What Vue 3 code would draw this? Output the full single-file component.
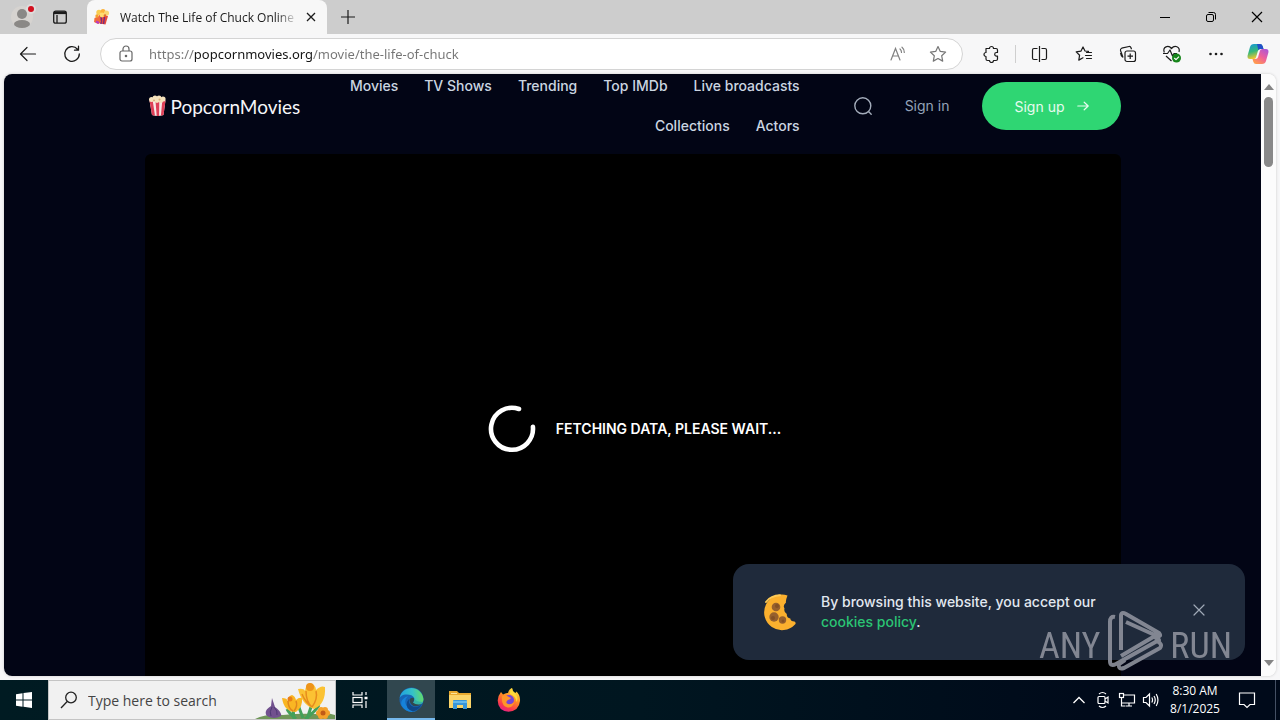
<script setup>
import { ref } from 'vue'

const url = ref('https://popcornmovies.org/movie/the-life-of-chuck')
const query = ref('')
const links = ['Movies', 'TV Shows', 'Trending', 'Top IMDb', 'Live broadcasts', 'Collections', 'Actors']
</script>

<template>
  <div class="desktop">
    <header class="tabs">
      <button class="tab-tool profile" aria-label="Profile">
        <svg width="28" height="28" viewBox="0 0 28 28">
          <circle cx="14" cy="14" r="11" fill="#d6d3d0" />
          <circle cx="14" cy="11" r="5" fill="#8a8886" />
          <ellipse cx="14" cy="21" rx="8" ry="4" fill="#8a8886" />
          <circle cx="23" cy="6" r="5" fill="#dedcdb" />
          <circle cx="23" cy="6" r="3" fill="#d20f1e" />
        </svg>
      </button>
      <button class="tab-tool" aria-label="Tab actions">
        <svg width="16" height="16" viewBox="0 0 16 16" fill="none" stroke="#1b1b1b" stroke-width="1.3">
          <rect x="1.7" y="2.2" width="12.6" height="12" rx="2" />
          <path d="M2 3.8h12" stroke-width="2.600" />
          <path d="M5 6v8" />
        </svg>
      </button>
      <div class="tab">
        <svg width="18" height="18" viewBox="0 0 18 18">
          <path d="M6 7l9 1-2.500 8.500-6-1z" fill="#e9483a" />
          <path d="M8.500 8l-.5 8M11.500 9l-1 7" stroke="#6d2c86" stroke-width="1.300" />
          <path d="M1.500 10l4.500-2 2 6-3 2-4-2z" fill="#f26b3c" />
          <path d="M3 13.500l3 1.500" stroke="#b53cc4" stroke-width="2" />
          <circle cx="6" cy="4.500" r="2.700" fill="#f9cc4f" />
          <circle cx="10" cy="3.500" r="2.500" fill="#fbb23a" />
          <circle cx="13.500" cy="5" r="2.600" fill="#f9d774" />
          <circle cx="9" cy="7" r="2.400" fill="#ffdc70" />
          <circle cx="4" cy="8" r="1.700" fill="#f5a12e" />
          <circle cx="12" cy="7.500" r="1.300" fill="#e2702b" />
        </svg>
        <span class="tab-title">Watch The Life of Chuck Online Full</span>
        <button class="tab-close" aria-label="Close tab">
          <svg width="12" height="12" viewBox="0 0 12 12" stroke="#1b1b1b" stroke-width="1.3"><path d="M2 2l8 8M10 2l-8 8" /></svg>
        </button>
      </div>
      <button class="new-tab" aria-label="New tab">
        <svg width="16" height="16" viewBox="0 0 16 16" stroke="#1b1b1b" stroke-width="1.2"><path d="M8 1v14M1 8h14" /></svg>
      </button>
      <div class="window-buttons">
        <button aria-label="Minimize"><svg width="12" height="12" viewBox="0 0 12 12" stroke="#000"><path d="M1 6.500h10" /></svg></button>
        <button aria-label="Restore">
          <svg width="12" height="12" viewBox="0 0 12 12" fill="none" stroke="#000"><rect x="1.500" y="3.500" width="7" height="7" rx="1.500" /><path d="M3.500 1.500h5a2 2 0 0 1 2 2v5" /></svg>
        </button>
        <button aria-label="Close"><svg width="12" height="12" viewBox="0 0 12 12" stroke="#000" stroke-width="1.2"><path d="M1 1l10 10M11 1L1 11" /></svg></button>
      </div>
    </header>

    <div class="toolbar">
      <button class="tool" aria-label="Back">
        <svg width="18" height="18" viewBox="0 0 18 18" fill="none" stroke="#1b1b1b" stroke-width="1.2" stroke-linecap="round" stroke-linejoin="round"><path d="M16.500 9H1.500M8 2.500L1.500 9 8 15.500" /></svg>
      </button>
      <button class="tool" aria-label="Refresh">
        <svg width="18" height="18" viewBox="0 0 18 18" fill="none" stroke="#1b1b1b" stroke-width="1.3" stroke-linecap="round" stroke-linejoin="round"><path d="M16.300 9A7.300 7.300 0 1 1 14.500 4.200M15.500 1.200v4h-4" /></svg>
      </button>
      <div class="address">
        <svg width="16" height="18" viewBox="0 0 16 18" fill="none" stroke="#666" stroke-width="1.2"><rect x="2" y="6" width="12" height="10" rx="2" /><path d="M5 6V4a3 3 0 0 1 6 0v2" /><circle cx="8" cy="11" r=".7" fill="#666" /></svg>
        <input v-model="url" class="url" type="text" aria-label="Address" spellcheck="false" />
        <button class="address-tool" aria-label="Read aloud">
          <svg width="18" height="18" viewBox="0 0 18 18" fill="none" stroke="#808080" stroke-width="1.2" stroke-linecap="round"><path d="M2 15L6.500 3.500 11 15M3.500 11h6M11 4q1.500 1.300 1.500 3.500M13 2.200q2.500 2 2.300 5.300" /></svg>
        </button>
        <button class="address-tool" aria-label="Favorite">
          <svg width="18" height="18" viewBox="0 0 18 18" fill="none" stroke="#777" stroke-width="1.200" stroke-linejoin="round"><path d="M9 1.500l2.300 4.900 5.300.7-3.900 3.700 1 5.300L9 13.500l-4.700 2.600 1-5.300L1.400 7.100l5.300-.7z" /></svg>
        </button>
      </div>
      <button class="tool" aria-label="Extensions">
        <svg width="18" height="18" viewBox="0 0 18 18" fill="none" stroke="#1b1b1b" stroke-width="1.200" stroke-linejoin="round"><path d="M4 3.500h3.500a2 2 0 0 1 4 0H14q1.500 0 1.500 1.500v2.500h-1a1.800 1.800 0 0 0 0 3.600h1V14q0 1.500-1.500 1.500h-2.500a2 2 0 0 1-4 0H5.500Q4 15.500 4 14v-2.500a2 2 0 0 1 0-4z" /></svg>
      </button>
      <span class="divider"></span>
      <button class="tool" aria-label="Split screen">
        <svg width="18" height="18" viewBox="0 0 18 18" fill="none" stroke="#1b1b1b" stroke-width="1.200"><path d="M8.500 1v16M6.500 3.500H3q-1.500 0-1.500 1.500v8q0 1.500 1.500 1.500h3.500M10.500 3.500H14q1.500 0 1.500 1.500v8q0 1.500-1.500 1.500h-3.500" /></svg>
      </button>
      <button class="tool" aria-label="Favorites">
        <svg width="18" height="18" viewBox="0 0 18 18" fill="none" stroke="#1b1b1b" stroke-width="1.200" stroke-linejoin="round" stroke-linecap="round"><path d="M13.500 6.400l-3.500-.4L8 2 5.900 6.200l-4.700.7 3.400 3.300-.8 4.900L8 12.800M11.500 7.500h5M10.500 10.500h6M11.500 13.500h5" /></svg>
      </button>
      <button class="tool" aria-label="Collections">
        <svg width="18" height="18" viewBox="0 0 18 18" fill="none" stroke="#1b1b1b" stroke-width="1.200" stroke-linejoin="round"><rect x="6" y="6" width="10.500" height="10.500" rx="2" /><path d="M11.200 8.500v5.500M8.500 11.200H14M4 12.500L1.500 5.500q-.4-1.700 1.200-2.300L10 1.500q1.500-.2 2 1.300l.5 1.400M3.500 12Q2 11 1.500 8" /></svg>
      </button>
      <button class="tool" aria-label="Browser essentials">
        <svg width="20" height="20" viewBox="0 0 20 20" fill="none" stroke="#1b1b1b" stroke-width="1.200" stroke-linejoin="round"><path d="M2.300 8.500C.2 2.500 6.500.8 9.500 4.500 12.500.800 18.500 2.500 17 8M4 12l5.500 5M1 9.500h4.500L8 6l2.500 6 1.500-2.500h3" /><circle cx="14.500" cy="14" r="4.500" fill="#16851b" stroke="none" /><path d="M12.300 14l1.700 1.600 3-3" stroke="#fff" /></svg>
      </button>
      <button class="tool" aria-label="More">
        <svg width="18" height="18" viewBox="0 0 18 18" fill="#1b1b1b"><circle cx="3.500" cy="9" r="1.300" /><circle cx="9" cy="9" r="1.300" /><circle cx="14.500" cy="9" r="1.300" /></svg>
      </button>
      <button class="tool copilot" aria-label="Copilot">
        <svg width="22" height="20" viewBox="0 0 22 20">
          <defs>
            <linearGradient id="cpLeft" x1="0" y1="0" x2=".3" y2="1"><stop offset="0" stop-color="#1596dc" /><stop offset=".55" stop-color="#36b879" /><stop offset="1" stop-color="#f4c62f" /></linearGradient>
            <linearGradient id="cpRight" x1="1" y1="0" x2=".3" y2="1"><stop offset="0" stop-color="#a354de" /><stop offset=".55" stop-color="#ef5f9a" /><stop offset="1" stop-color="#ff9a4f" /></linearGradient>
          </defs>
          <path d="M7 0h6q2 0 2.700 2.200l.8 2.800h-3q-2 0-2.600 2L9 13.500Q8.400 15 6.500 15H3Q0 15 .6 11.500L3 3q.8-3 4-3z" fill="url(#cpLeft)" />
          <path d="M15 20H9q-2 0-2.700-2.200L5.500 15h3q2 0 2.600-2L13 6.500q.6-1.500 2.500-1.500H19q3 0 2.400 3.500L19 17q-.8 3-4 3z" fill="url(#cpRight)" />
          <path d="M10 0h3q2 0 2.700 2.200l.8 2.800h-3q-1.500 0-2.200 1.200z" fill="#234fc9" />
        </svg>
      </button>
    </div>

    <main class="viewport">
      <div class="page">
        <div class="container">
          <header class="site-header">
            <a class="brand" href="#">
              <svg width="19" height="22" viewBox="0 0 19 22">
                <path d="M1.500 5.500h16L15.500 20q-6 2.200-11.500 0z" fill="#f7e7e6" />
                <path d="M1.500 5.500h3.200L7 20.800 4 20zM7.500 6h3.800l-.2 15-2.400-.100zM14.300 5.500h3.200L15.500 20l-2.600.8z" fill="#de3f57" />
                <g fill="#f6e3bd"><circle cx="3.500" cy="4.500" r="2.500" /><circle cx="7" cy="3" r="2.500" /><circle cx="11" cy="2.800" r="2.300" /><circle cx="15" cy="4" r="2.600" /><circle cx="9" cy="5.500" r="2.400" /><circle cx="13" cy="6" r="2" /></g>
                <circle cx="6" cy="5.500" r="1" fill="#dcb47a" /><circle cx="11.500" cy="4.500" r="1" fill="#dcb47a" />
              </svg>
              <span>PopcornMovies</span>
            </a>
            <nav class="nav">
              <a v-for="link in links" :key="link" href="#">{{ link }}</a>
            </nav>
            <button class="search" aria-label="Search">
              <svg width="20" height="20" viewBox="0 0 20 20" fill="none" stroke="#a3acba" stroke-width="1.400" stroke-linecap="round"><circle cx="9.800" cy="9.800" r="8" /><path d="M15.800 15.800l2.400 2.400" /></svg>
            </button>
            <a class="sign-in" href="#">Sign in</a>
            <button class="sign-up">
              Sign up
              <svg width="12" height="12" viewBox="0 0 12 12" fill="none" stroke="#e6fbef" stroke-width="1.200" stroke-linecap="round" stroke-linejoin="round"><path d="M.8 6h10.400M7.200 2.200L11.200 6 7.200 9.800" /></svg>
            </button>
          </header>
          <section class="player">
            <svg width="48" height="48" viewBox="0 0 48 48" fill="none" stroke="#fff" stroke-width="4.600" stroke-linecap="round"><path d="M31 4A21 21 0 1 0 44.900 21.800" /></svg>
            <strong>FETCHING DATA, PLEASE WAIT...</strong>
          </section>
        </div>
        <aside class="cookies">
          <svg width="36" height="38" viewBox="0 0 36 38">
            <path d="M25.500 2.500A17.800 17.800 0 1 0 33 31.500Q34.500 30 32.500 28.500 28.500 28.500 28.300 25.500 24.500 25 24.800 21 21.500 19 22.500 15.500 20.500 12.500 24 9.500 23.500 7.500 25.500 2.500z" fill="#fbb02e" />
            <path d="M4 9Q9 2.500 18 2.300" stroke="#ffca55" stroke-width="2" fill="none" stroke-linecap="round" />
            <g fill="#97602d"><circle cx="14" cy="14" r="4.300" /><circle cx="12" cy="24" r="4.700" /><circle cx="20.500" cy="27" r="3.700" /></g>
            <g fill="#845024"><circle cx="15" cy="13" r="2" /><circle cx="11" cy="25" r="2" /><circle cx="21" cy="28" r="1.500" /></g>
          </svg>
          <p>By browsing this website, you accept our <a href="#">cookies policy</a>.</p>
          <button aria-label="Dismiss"><svg width="14" height="14" viewBox="0 0 14 14" stroke="#a0a9b7" stroke-width="1.200" stroke-linecap="round"><path d="M2 2l10 10M12 2L2 12" /></svg></button>
        </aside>
        <div class="watermark">
          <span>ANY</span>
          <svg width="56" height="62" viewBox="0 0 56 62" fill="none" stroke="#8d919c" stroke-width="4" stroke-linejoin="round">
            <path d="M8 7Q3 6 3 12V51Q3 57 9 54L52 30L47 26.500L14 46" />
            <path d="M14 40V6Q14 1 19 4L52 23Q55 27 50 26L19 12" />
            <path d="M18 50L12 54Q11 60 17 58L53 38Q56 34 50 31" />
          </svg>
          <span>RUN</span>
        </div>
      </div>
      <div class="scrollbar">
        <svg width="10" height="6" viewBox="0 0 10 6"><path d="M5 0l5 6H0z" fill="#858585" /></svg>
        <span class="thumb"></span>
        <svg class="down" width="10" height="6" viewBox="0 0 10 6"><path d="M5 6L0 0h10z" fill="#858585" /></svg>
      </div>
    </main>

    <footer class="taskbar">
      <button class="task" aria-label="Start">
        <svg width="16" height="16" viewBox="0 0 16 16" fill="#fff"><path d="M0 2.200L6.500 1.300V7.500H0zM7.500 1.100L16 0v7.500H7.500zM0 8.500h6.500v6.200L0 13.800zM7.500 8.500H16V16l-8.500-1.200z" /></svg>
      </button>
      <label class="finder">
        <svg width="18" height="18" viewBox="0 0 18 18" fill="none" stroke="#222" stroke-width="1.300"><circle cx="11" cy="6.500" r="5.300" /><path d="M7.200 10.500L1 17" /></svg>
        <input v-model="query" type="text" placeholder="Type here to search" aria-label="Type here to search" />
        <svg class="flowers" width="80" height="38" viewBox="0 0 80 38">
          <path d="M0 38Q12 32 28 34 45 32 62 33 72 31 80 34V38z" fill="#6f9758" />
          <path d="M12 35q-4-5 4-10l1-8 3 9q7 5 6 9-7 4-14 0z" fill="#71518e" /><path d="M17 26q-3 5-1 9M19 26q4 4 3 8" stroke="#4e3873" fill="none" />
          <path d="M38 28L39 38M56 26L52 38M41 38q-7-6-9-10M50 38q10-7 14-14M48 37q-4-10-5-14" stroke="#44a05a" stroke-width="3" fill="none" />
          <path d="M27 17q5 0 6 3 0-5 4-6 3 1 4 5 3-3 6-2 1 9-6 14-12 0-14-14z" fill="#f9b623" /><path d="M33 20q0 7 5 10M41 20q2 5-2 10" stroke="#df861e" fill="none" stroke-width="1.500" /><circle cx="35" cy="18" r="2.500" fill="#e97e17" />
          <path d="M43 8q6-1 7 2 1-7 5-8 6 2 6 7 5-5 9-3 1 17-11 22-12-4-16-20z" fill="#fbc233" /><path d="M51 10q0 11 6 16M61 10q2 8-4 16M47 13q3 8 10 13" stroke="#e78c1e" fill="none" stroke-width="1.500" /><circle cx="55" cy="6" r="4" fill="#ee9419" />
          <g fill="#f5a12a"><circle cx="66" cy="29" r="3" /><circle cx="70" cy="29" r="3" /><circle cx="64" cy="32" r="3" /><circle cx="72" cy="32" r="3" /><circle cx="66" cy="35" r="3" /><circle cx="70" cy="35" r="3" /></g><circle cx="68" cy="32" r="2.500" fill="#c15a16" />
        </svg>
      </label>
      <div class="apps">
        <button class="task" aria-label="Task view">
          <svg width="18" height="18" viewBox="0 0 18 18" fill="none" stroke="#fff" stroke-width="1.200"><path d="M2 1v3h9V1M2 17v-3h9v3M15 1v3M15 10v7" /><rect x="2" y="6.500" width="9" height="5" /><path d="M13.500 7h3" stroke-width="2.500" /></svg>
        </button>
        <button class="task active" aria-label="Microsoft Edge">
          <svg width="25" height="25" viewBox="0 0 25 25">
            <defs>
              <linearGradient id="edTop" x1="0" y1=".4" x2="1" y2=".3"><stop offset="0" stop-color="#20a1e1" /><stop offset=".55" stop-color="#35c1c8" /><stop offset="1" stop-color="#67dd62" /></linearGradient>
            </defs>
            <circle cx="12.500" cy="12.500" r="12" fill="#1765b7" />
            <path d="M.6 11C3-2 22-3 24.500 12q.2 5-5.500 5.500-4 0-5-2 2-1.500 1.200-4.500C14 8 10 7 6 7.500 3 8 1 9.500.6 11z" fill="url(#edTop)" />
            <path d="M9 9Q4 14 8 19.500q4 5.500 11 4Q8 28 2.500 18.500.500 12.500 9 9z" fill="#1682da" />
            <path d="M10 12q-1 6 5 8 5 .5 8-3-3 6-9 7.500Q6 22 8 15z" fill="#104788" />
            <path d="M14.200 15.600q2-1.500 1-4.500 1.200 4 8.800 4-2 3-5.500 3-3.300-.2-4.300-2.500z" fill="#35b3a4" />
            <path d="M14 15.600q2-2 .8-4.600-3-1-4.300 1.500 0 4 4 6.500 4 1 8.500-2-6 1.500-9-1.400z" fill="#31474f" />
          </svg>
        </button>
        <button class="task" aria-label="File Explorer">
          <svg width="22" height="20" viewBox="0 0 22 20"><path d="M0 1h8l2 2h12v3H0z" fill="#e8a92f" /><path d="M0 5h22v13H0z" fill="#fbd469" /><path d="M2 3h6v1H2z" fill="#fbe49b" /><path d="M4 11q0-1 1-1h12q1 0 1 1v8h-4v-4H8v4H4z" fill="#3995d9" /><path d="M4 13h14v-2H4z" fill="#65b8ec" /></svg>
        </button>
        <button class="task" aria-label="Firefox">
          <svg width="24" height="24" viewBox="0 0 24 24">
            <defs><linearGradient id="ffBody" x1=".8" y1="0" x2=".3" y2="1"><stop offset="0" stop-color="#ffe644" /><stop offset=".45" stop-color="#ff8a25" /><stop offset=".8" stop-color="#fa384e" /><stop offset="1" stop-color="#e32287" /></linearGradient></defs>
            <path d="M4 4l2 2.500Q9 4.500 11 5q1-4 4-5 0 3 3 5 2-1 1-2 4.500 4 4 10-1 10-11.500 10.700Q1 23 .7 12.500.7 8 4 4z" fill="url(#ffBody)" />
            <circle cx="12" cy="12" r="5" fill="#7546d8" /><path d="M5 8q3-2 7 1l2 1q-1 1.500-3 2-2 1-1.500 3 3 3 8-1-2 6-7 5.500Q4 18 5 8z" fill="#ff9629" /><path d="M15 0q0 3 3 5 4 5 1.500 9Q19 8 13 6q0-4 2-6z" fill="#ffda3a" />
          </svg>
        </button>
      </div>
      <div class="tray">
        <button aria-label="Show hidden icons"><svg width="14" height="14" viewBox="0 0 14 14" fill="none" stroke="#fff" stroke-width="1.300"><path d="M1.500 10L7 4.500 12.500 10" /></svg></button>
        <button aria-label="Meet now"><svg width="14" height="18" viewBox="0 0 14 18" fill="none" stroke="#fff" stroke-width="1.200"><rect x="2" y="5.500" width="7" height="7" rx="1" /><path d="M9 8l3-2v6L9 10M3 3q3.500-3 7 0M3 15q3.500 3 7 0" /></svg></button>
        <button aria-label="Network"><svg width="18" height="16" viewBox="0 0 18 16" fill="none" stroke="#fff" stroke-width="1.200"><path d="M6 3h10.500v8H4M8 14h6M11 11v3M3.500 6v8h4" /><rect x="1.500" y="1.500" width="4" height="4" /></svg></button>
        <button aria-label="Volume"><svg width="18" height="16" viewBox="0 0 18 16" fill="none" stroke="#fff" stroke-width="1.200"><path d="M1.500 5.500h2.500L7.500 2v12L4 10.500H1.500zM9.800 5.500q1.500 2.500 0 5M12 4q2.500 4 0 8M14.200 2q3.500 6 0 12" /></svg></button>
        <button class="clock"><span>8:30 AM</span><span>8/1/2025</span></button>
        <button class="notices" aria-label="Notifications"><svg width="18" height="18" viewBox="0 0 18 18" fill="none" stroke="#fff" stroke-width="1.200"><path d="M1.500 2h15v11.500H12L9 16.500l-3-3H1.500z" /></svg></button>
        <span class="edge"></span>
      </div>
    </footer>
  </div>
</template>

<style>
body { margin: 0; }
</style>

<style scoped>
* { box-sizing: border-box; }
button { border: 0; padding: 0; background: none; font: inherit; color: inherit; display: flex; align-items: center; justify-content: center; }
svg { display: block; flex: none; }
a { text-decoration: none; }

.desktop { height: 100vh; display: flex; flex-direction: column; background: #f7f7f8; font-family: "Open Sans", "Noto Sans", sans-serif; overflow: hidden; }

.tabs { flex: none; height: 34px; display: flex; background: #cdcdcd; }
.tab-tool { width: 36px; }
.profile { width: 42px; padding-left: 2px; }
.tab { width: 240px; margin-left: 9px; padding: 0 8px 0 6px; display: flex; align-items: center; gap: 9px; background: #f7f7f7; border-radius: 8px 8px 0 0; }
.tab-title { flex: 1; min-width: 0; overflow: hidden; white-space: nowrap; font-size: 12px; color: #1b1b1b; mask-image: linear-gradient(to right, #000 88%, transparent); }
.tab-close { width: 16px; height: 24px; margin-left: -4px; }
.new-tab { width: 42px; }
.window-buttons { display: flex; margin-left: auto; }
.window-buttons button { width: 46px; }

.toolbar { flex: none; height: 40px; padding-left: 6px; display: flex; align-items: center; }
.tool { width: 44px; height: 36px; }
.copilot { width: 42px; padding-right: 2px; }
.divider { width: 1px; height: 18px; margin: 0 2px; background: #cfcfcf; }
.address { flex: 1; min-width: 0; height: 32px; margin: 0 6px; padding: 0 4px 0 17px; display: flex; align-items: center; background: #fff; border: 1px solid #d4d4d4; border-radius: 16px; }
.url { flex: 1; min-width: 0; height: 28px; margin-left: 15px; padding: 0; border: 0; outline: 0; font-family: "Noto Sans", sans-serif; font-size: 13px; background: linear-gradient(to right, #757575 45px, #151515 45px, #151515 164px, #757575 164px); background-clip: text; -webkit-background-clip: text; -webkit-text-fill-color: transparent; }
.address-tool { width: 40px; height: 28px; }

.viewport { flex: 1; min-height: 0; margin: 0 4px 4px; display: flex; border-radius: 8px; overflow: hidden; background: #fcfcfc; box-shadow: 0 0 3px #c8c8c8; }
.page { position: relative; flex: 1; min-width: 0; overflow: hidden; background: #020515; font-family: Inter, sans-serif; font-size: 14px; }
.container { max-width: 976px; margin: 0 auto; }
.site-header { height: 64px; margin-bottom: 16px; padding-left: 3px; display: flex; align-items: center; }
.brand { display: flex; align-items: center; gap: 4px; color: #f6f6f9; font-family: Lato, sans-serif; font-size: 19px; }
.nav { flex: 1; display: flex; flex-wrap: wrap; justify-content: flex-end; column-gap: 26px; }
.nav a { line-height: 40px; font-weight: 500; color: #cbd5e1; }
.search { width: 40px; height: 40px; margin-left: 43px; }
.sign-in { margin-left: 22px; line-height: 40px; color: #94a3b8; }
.sign-up { height: 48px; margin-left: 33px; padding: 0 32px; gap: 12px; border-radius: 24px; background: #2fd673; color: #e6fbef; }
.player { aspect-ratio: 16 / 9; padding-left: 4px; display: flex; align-items: center; justify-content: center; gap: 20px; border-radius: 6px; background: #000; color: #fff; }
.player strong { font-weight: 600; }

.cookies { position: absolute; right: 16px; bottom: 16px; width: 512px; height: 96px; padding: 0 30px 0 29px; display: flex; align-items: center; background: #1f2a3b; border-radius: 16px; }
.cookies p { width: 300px; margin: 0 0 0 23px; line-height: 20px; font-weight: 500; color: #e2e8f0; }
.cookies a { color: #2bc474; }
.cookies button { width: 32px; height: 32px; margin: 0 0 4px auto; }
.watermark { position: absolute; right: 29px; bottom: 4px; display: flex; align-items: flex-end; gap: 7px; color: #8d919c; font-family: "Liberation Sans Narrow", "Roboto Condensed", Roboto, sans-serif; font-size: 36px; line-height: 52px; opacity: .9; }

.scrollbar { width: 15px; display: flex; flex-direction: column; align-items: center; padding: 10px 0; background: #fcfcfc; }
.thumb { width: 9px; height: 70px; margin-top: 7px; border-radius: 5px; background: #898989; }
.down { margin-top: auto; }

.taskbar { flex: none; height: 40px; display: flex; background: linear-gradient(to right, #001b22, #001620 50%, #000a1a 85%); color: #fff; }
.task { width: 48px; height: 40px; }
.active { margin-left: 2px; background: #31474f; border-bottom: 2px solid #76b9ed; }
.finder { width: 288px; display: flex; align-items: center; padding-left: 11px; background: #f1f1f1; border: 1px solid #c4c4c4; }
.finder input { flex: 1; min-width: 0; height: 36px; margin-left: 10px; padding: 0; border: 0; outline: 0; background: none; font-family: "Open Sans", sans-serif; font-size: 14px; color: #333; }
.finder input::placeholder { color: #444; opacity: 1; }
.apps { display: flex; gap: 1px; }
.tray { margin-left: auto; display: flex; }
.tray button { width: 24px; }
.tray .clock { width: 64px; flex-direction: column; font-size: 12px; line-height: 18px; }
.tray .notices { width: 40px; }
.edge { width: 1px; margin: 0 4px 0 8px; background: #445064; }
</style>
